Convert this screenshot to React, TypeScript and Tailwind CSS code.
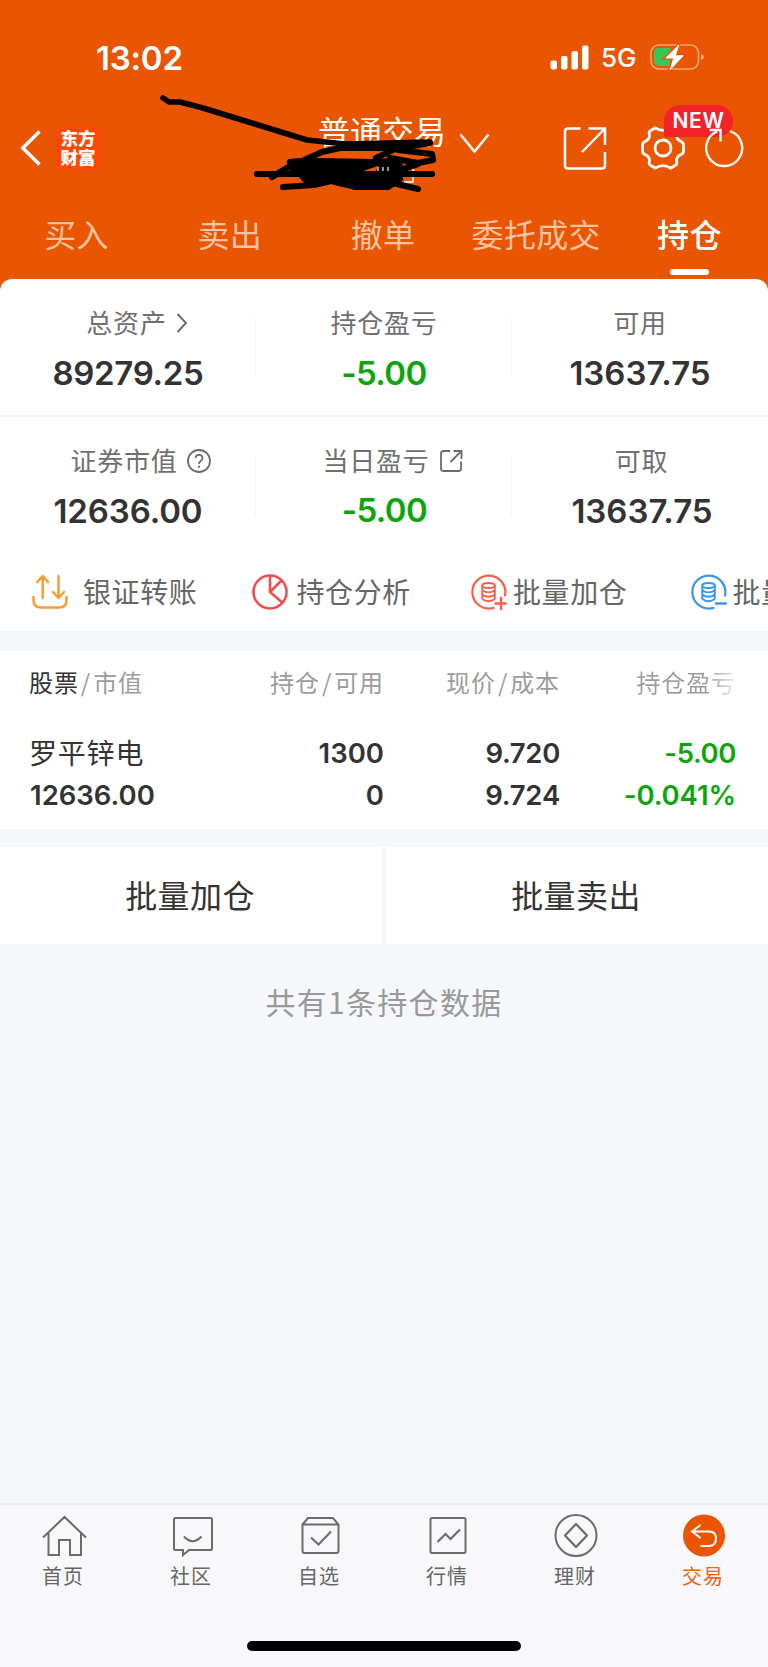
import type { ReactNode } from "react";

const CJK = "font-['Noto_Sans_CJK_SC',sans-serif]";
const NUM = "font-['Inter','Noto_Sans_CJK_SC',sans-serif]";

function StatusBar() {
  return (
    <div className="flex h-[115px] items-center pl-[96px] text-white">
      <span className={`${NUM} w-[454px] text-[33px] leading-[40px] font-semibold tracking-[-0.2px]`}>13:02</span>
      <svg className="h-[25px] w-[39px]" viewBox="0 0 39 25" fill="#fff">
        <rect x="0.5" y="15.5" width="6.5" height="9" rx="2" />
        <rect x="11" y="11" width="6.5" height="13.5" rx="2" />
        <rect x="21.5" y="6" width="6.5" height="18.5" rx="2" />
        <rect x="32" y="0.5" width="6.5" height="24" rx="2" />
      </svg>
      <span className={`${NUM} ml-[12px] w-[49px] pt-[1px] text-[26px] leading-[32px] font-medium`}>5G</span>
      <svg className="-mt-px h-[28px] w-[54px]" viewBox="0 0 54 28" fill="none">
        <rect x="1" y="2" width="47.5" height="24" rx="8" stroke="#f6a577" strokeWidth="1.6" />
        <path d="M51 11c2 .6 2.8 1.600 2.800 3s-.8 2.400-2.800 3z" fill="#f6a577" />
        <path d="M9 5h12l-6 10h6l-2 8H9q-5 0-5-5v-8q0-5 5-5z" fill="#34c759" />
        <path d="M29.500 0.500L14.500 15.500h8L19 27.500 34.500 12h-8z" fill="#fff" stroke="#e95500" strokeWidth="2.500" />
        <path d="M28.800 2L15.800 15h8L20.300 26.500 33.200 12.700h-8z" fill="#fff" stroke="#fff" strokeWidth="1" strokeLinejoin="round" />
      </svg>
    </div>
  );
}

function NavBar() {
  return (
    <div className="relative flex h-[65px] items-center text-white">
      <svg className="ml-[20px] h-[36px] w-[21px]" viewBox="0 0 21 36" fill="none" stroke="#fff" strokeWidth="3.500">
        <path d="M19.500 1.500L2.800 18l16.700 16.500" />
      </svg>
      <div className={`${CJK} ml-[14px] flex h-[46px] w-[46px] flex-col items-center justify-center rounded-[9px] bg-[#ff4806] pb-[2px] text-[17.5px] leading-[19px] font-black`}>
        <span>东方</span>
        <span>财富</span>
      </div>
      <div className={`${CJK} ml-[217px] h-[70px] w-[141px] text-[32px] leading-[34px]`}>普通交易</div>
      <svg className="-mt-[8px] h-[21px] w-[31px]" viewBox="0 0 31 21" fill="none" stroke="#fff" strokeWidth="2.400">
        <path d="M1.500 1.500L15.500 18.500l14-17" />
      </svg>
      <svg className="ml-[73px] h-[44px] w-[44px]" viewBox="0 0 44 44" fill="none" stroke="#fff" strokeWidth="2.500">
        <path d="M17.500 3H5Q2 3 2 6v34q0 3 3 3h34q3 0 3-3V26.500" transform="translate(0 -.5)" />
        <path d="M25.500 2.500H42V19M41 3.500L19 26" />
      </svg>
      <svg className="ml-[33px] h-[44px] w-[46px]" viewBox="0 0 46 44" fill="none" stroke="#fff" strokeWidth="2.800" strokeLinejoin="round">
        <path d="M15.500 1.800Q23 7 30.500 1.800L36 5Q37.500 6 36.500 9.500Q36.500 13.500 41 15.500Q43.500 16.500 43.500 19V25Q43.500 27.500 41 28.500Q36.500 30.500 36.500 34.500Q37.500 38 36 39L30.500 42.200Q23 37 15.500 42.200L10 39Q8.500 38 9.500 34.500Q9.500 30.500 5 28.500Q2.500 27.500 2.500 25V19Q2.500 16.500 5 15.500Q9.500 13.500 9.500 9.500Q8.500 6 10 5Z" />
        <circle cx="23" cy="22" r="8" />
      </svg>
      <div className={`${NUM} absolute top-[-10px] left-[664px] flex h-[32px] w-[69px] items-center justify-center rounded-t-[16px] rounded-br-[16px] rounded-bl-[3px] bg-[#f4222a] text-[21px] font-semibold tracking-[0.6px]`}>
        NEW
      </div>
      <svg className="relative ml-[19px] h-[42px] w-[40px]" viewBox="0 0 40 42" fill="none" stroke="#fff" strokeWidth="2.300">
        <path d="M12 4.500A18 18 0 1 0 25 4M4.500 3H15.500V14.500" />
      </svg>
    </div>
  );
}

function Scribble() {
  return (
    <svg className="pointer-events-none absolute top-0 left-0 h-[210px] w-[460px]" viewBox="0 0 460 210" fill="none" strokeLinecap="round" strokeLinejoin="round">
      <path d="M413 176v6h-9M411 167l3 4" stroke="#fff" strokeWidth="1.500" strokeLinecap="butt" />
      <path d="M291 159L320 158L372 159L396 158L403 164L397 176L400 182L388 189L356 188L331 183L312 187L305 184L298 176L290 172Z" fill="#000" />
      <path d="M163 98L169 102L180 102L203 108L255 124L307 140L345 144L430 142" stroke="#000" strokeWidth="5.500" />
      <path d="M430 143L395 149L376 158M345 148H400M398 150L432 154L433 160L418 163L390 158M418 164L400 170L396 174M290 162L302 161L322 152L345 147M292 165L272 177M257 174H432M283 187L314 185L331 181L356 187H388L400 179M380 180L418 189" stroke="#000" strokeWidth="6.200" />
      <path d="M363 171L378 166L376 171Z" fill="#e95500" />
      <path d="M378 167v4M383 167v4M388 167v4" stroke="#fff" strokeWidth="1.200" strokeLinecap="butt" />
    </svg>
  );
}

function Tabs() {
  const tabs = ["买入", "卖出", "撤单", "委托成交", "持仓"];
  return (
    <div className={`${CJK} grid h-[99px] grid-cols-5 pr-[2px] text-[32px] leading-[40px] tracking-[0.3px]`}>
      {tabs.map((t, i) => (
        <div key={t} className="flex flex-col items-center pt-[33px]">
          <span className={i === 4 ? "font-medium whitespace-nowrap text-white" : "whitespace-nowrap text-[#fbc3a2]"}>{t}</span>
          {i === 4 && <div className="mt-[16px] h-[6px] w-[39px] shrink-0 rounded-full bg-white" />}
        </div>
      ))}
    </div>
  );
}

const HelpIcon = () => (
  <svg className="mt-[2px] ml-[9px] h-[24px] w-[24px]" viewBox="0 0 24 24" fill="none" stroke="#6b6b6b" strokeWidth="1.800">
    <circle cx="12" cy="12" r="11" />
    <path d="M8.500 9.200q0-3.400 3.500-3.400t3.500 3.200q0 1.800-1.800 3Q12 13.200 12 15" />
    <path d="M12 16.800v2" strokeWidth="2" />
  </svg>
);
const ShareIcon = () => (
  <svg className="mt-[2px] ml-[9px] h-[24px] w-[24px]" viewBox="0 0 24 24" fill="none" stroke="#6b6b6b" strokeWidth="1.800">
    <path d="M11 2H4.500Q2 2 2 4.500v15Q2 22 4.500 22h15q2.500 0 2.500-2.500V12.500M14.500 2H22.500V10M22 2.500L11.500 13" />
  </svg>
);
const Chevron = () => (
  <svg className="mt-[2px] ml-[9px] h-[20px] w-[12px]" viewBox="0 0 12 20" fill="none" stroke="#6b6b6b" strokeWidth="1.900">
    <path d="M1.500 1L10 10l-8.500 9" />
  </svg>
);

interface StatProps {
  label: string;
  value: string;
  icon?: ReactNode;
  labelPad?: string;
  valueClass?: string;
  last?: boolean;
}
function Stat({ label, value, icon, labelPad = "", valueClass = "text-[#333]", last }: StatProps) {
  return (
    <div className="relative flex flex-col items-center pt-[25px]">
      <div className={`${CJK} ${labelPad} flex h-[36px] items-center text-[26px] leading-[36px] tracking-[0.8px] text-[#6f6f6f]`}>
        {label}
        {icon}
      </div>
      <div className={`${NUM} mt-[13px] text-[33px] leading-[40px] font-semibold ${valueClass}`}>{value}</div>
      {!last && <div className="absolute top-[39px] right-0 h-[59px] w-px bg-[#f5f5f5]" />}
    </div>
  );
}

const BankIcon = () => (
  <svg className="h-[36px] w-[36px]" viewBox="0 0 36 36" fill="none" stroke="#f2a035" strokeWidth="2.500" strokeLinecap="round" strokeLinejoin="round">
    <path d="M1.500 23v3.500q0 7 8 7h17q8 0 8-7V23M10.700 24V2.500M5.200 8l5.500-6L16 8M26.500 2v21.500M21 18l5.500 6 5.500-6" />
  </svg>
);
const PieIcon = () => (
  <svg className="h-[36px] w-[36px]" viewBox="0 0 36 36" fill="none" stroke="#f5494f" strokeWidth="2.500">
    <circle cx="18" cy="18" r="16.500" />
    <path d="M18 1.500V18L30.500 28.700M18 18L29.500 6.500" />
  </svg>
);
function StackIcon({ minus }: { minus?: boolean }) {
  const color = minus ? "#3a95ee" : "#f8604d";
  return (
    <svg className="h-[36px] w-[36px]" viewBox="0 0 36 36" fill="none" stroke={color} strokeWidth="2.200" strokeLinecap="round">
      <path d="M22.500 33.900A16.500 16.500 0 1 1 34 21.500" />
      <ellipse cx="17.500" cy="11.500" rx="6.300" ry="2.500" strokeWidth="1.900" />
      <path d="M11.200 11.500V24.500q2 2.700 6.300 2.700t6.300-2.700V11.500M11.200 16q2 2.400 6.300 2.400t6.300-2.400M11.200 20.300q2 2.400 6.300 2.400t6.300-2.400" strokeWidth="1.900" />
      <path d={minus ? "M25 29.500h10" : "M24.500 29.500h10.500M30 24v11"} strokeWidth="2.500" />
    </svg>
  );
}

function Actions() {
  const items = [
    { label: "银证转账", icon: <BankIcon />, gap: "ml-[15px]" },
    { label: "持仓分析", icon: <PieIcon />, gap: "ml-[9px]" },
    { label: "批量加仓", icon: <StackIcon />, gap: "ml-[6px]" },
    { label: "批量卖出", icon: <StackIcon minus />, gap: "ml-[6px]" },
  ];
  return (
    <div className="flex h-[77px] overflow-hidden pl-[32px]">
      {items.map((it) => (
        <div key={it.label} className="flex h-[75px] w-[219.5px] shrink-0 items-center">
          {it.icon}
          <span className={`${CJK} ${it.gap} pb-[2px] text-[28px] leading-[40px] tracking-[0.6px] whitespace-nowrap text-[#666]`}>{it.label}</span>
        </div>
      ))}
    </div>
  );
}

const Slash = () => <span className="mx-[2px]">/</span>;

function Holdings() {
  return (
    <div className="h-[178px] bg-white pt-[13px] pl-[30px]">
      <div className={`${CJK} grid h-[36px] grid-cols-[178px_176px_176px_176px] text-right text-[24px] leading-[36px] tracking-[0.9px] text-[#9c9c9c]`}>
        <div className="-ml-px text-left"><span className="text-[#333]">股票</span><Slash />市值</div>
        <div>持仓<Slash />可用</div>
        <div>现价<Slash />成本</div>
        <div>
          <span className="bg-linear-to-r from-[#9c9c9c] from-70% to-[#eeeeee] bg-clip-text text-transparent">持仓盈亏</span>
        </div>
      </div>
      <div className={`${NUM} mt-[32px] grid grid-cols-[178px_176px_176px_176px] text-right text-[27.5px] leading-[42px] font-semibold text-[#333]`}>
        <div className={`${CJK} relative top-[-1px] left-[-1px] text-left text-[28px] font-normal tracking-[0.8px]`}>罗平锌电</div>
        <div>1300</div>
        <div className="tracking-[-0.3px]">9.720</div>
        <div className="tracking-[-0.4px] text-[#0da50d]">-5.00</div>
        <div className="text-left">12636.00</div>
        <div>0</div>
        <div className="tracking-[-0.2px]">9.724</div>
        <div className="tracking-[-0.1px] text-[#0da50d]">-0.041%</div>
      </div>
    </div>
  );
}

const navIcons: ReactNode[] = [
  <path key="h" d="M1 23.500L22.500 3 44 23.500M6.500 19V41H17V26H28V41H39V19" />,
  <g key="c"><path d="M5.500 4H40.500Q42 4 42 5.500V34.500Q42 36 40.500 36H19L13 41V36H5.500Q4 36 4 34.500V5.500Q4 4 5.500 4Z" /><path d="M14 22.500q8.500 9.500 17.500 0" strokeWidth="2.200" /></g>,
  <g key="z"><path d="M4.500 10.500L10 4H35L40.500 10.500V37Q40.500 39 38.500 39H6.500Q4.500 39 4.500 37ZM4.500 10.500H40.500" /><path d="M13 23.500l7.500 7L33 17.500" /></g>,
  <g key="q"><rect x="4.500" y="4" width="35" height="35" rx="1.500" /><path d="M11.500 28L19.500 20l5 5L34 15.500" strokeWidth="2.200" /></g>,
  <g key="l"><circle cx="22" cy="21.500" r="20.500" /><path d="M22 10L33 21.500 22 33 11 21.500Z" strokeWidth="2.200" strokeLinejoin="round" /></g>,
  <g key="j"><circle cx="22" cy="21.500" r="21" fill="#e95500" stroke="none" /><path d="M18.500 11L10 17.500l8.500 6.500M10 17.500H27Q34 17.500 34 24.500T27 32H18.500" stroke="#fff" strokeWidth="2" /></g>,
];

function BottomNav() {
  const labels = ["首页", "社区", "自选", "行情", "理财", "交易"];
  return (
    <nav className="flex h-[164px] flex-col items-center border-t-2 border-[#ebecee] bg-[#f8f8fb]">
      <div className="grid w-full grid-cols-6 pt-[9px]">
        {labels.map((l, i) => (
          <div key={l} className="flex flex-col items-center">
            <svg className="h-[44px] w-[45px]" viewBox="0 0 45 44" fill="none" stroke="#6c6c6c" strokeWidth="2">{navIcons[i]}</svg>
            <span className={`${CJK} mt-[3px] mr-[2px] text-[20px] leading-[30px] tracking-[0.9px] ${i === 5 ? "text-[#f0600f]" : "text-[#666]"}`}>{l}</span>
          </div>
        ))}
      </div>
      <div className="mt-[50px] h-[10px] w-[274px] rounded-full bg-black" />
    </nav>
  );
}

export default function App() {
  return (
    <div className="relative flex h-[1667px] w-[768px] flex-col overflow-hidden bg-[#f6f7fa]">
      <header className="h-[279px] shrink-0 bg-[#e95500]">
        <StatusBar />
        <NavBar />
        <Tabs />
      </header>
      <Scribble />
      <div className="h-[352px] shrink-0 bg-[#e95500]">
        <div className="h-full overflow-hidden rounded-t-[12px] bg-white">
          <div className="grid h-[138px] grid-cols-3 border-b-2 border-[#f7f7f7]">
            <Stat label="总资产" value="89279.25" icon={<Chevron />} labelPad="pl-[18px]" valueClass="text-[#333] tracking-[-0.3px]" />
            <Stat label="持仓盈亏" value="-5.00" valueClass="text-[#0da50d] tracking-[-0.6px]" />
            <Stat label="可用" value="13637.75" last />
          </div>
          <div className="grid h-[137px] grid-cols-3">
            <Stat label="证券市值" value="12636.00" icon={<HelpIcon />} labelPad="pl-[25px]" valueClass="text-[#333] tracking-[-0.1px]" />
            <Stat label="当日盈亏" value="-5.00" icon={<ShareIcon />} labelPad="pl-[17px]" valueClass="text-[#0da50d] tracking-[-0.6px] pl-[1px] relative -top-px" />
            <Stat label="可取" value="13637.75" labelPad="pl-[3px]" valueClass="text-[#333] pl-[4px]" last />
          </div>
          <Actions />
        </div>
      </div>
      <div className="h-[20px] shrink-0" />
      <Holdings />
      <div className={`${CJK} mt-[18px] grid h-[97px] grid-cols-2 gap-[4px] text-center text-[32px] leading-[95px] tracking-[0.4px] text-[#333]`}>
        <div className="bg-white pr-[2px]">批量加仓</div>
        <div className="bg-white pr-[2px]">批量卖出</div>
      </div>
      <div className={`${CJK} mt-[37px] flex-1 text-center text-[30px] leading-[40px] tracking-[1.3px] text-[#999]`}>共有1条持仓数据</div>
      <BottomNav />
    </div>
  );
}
